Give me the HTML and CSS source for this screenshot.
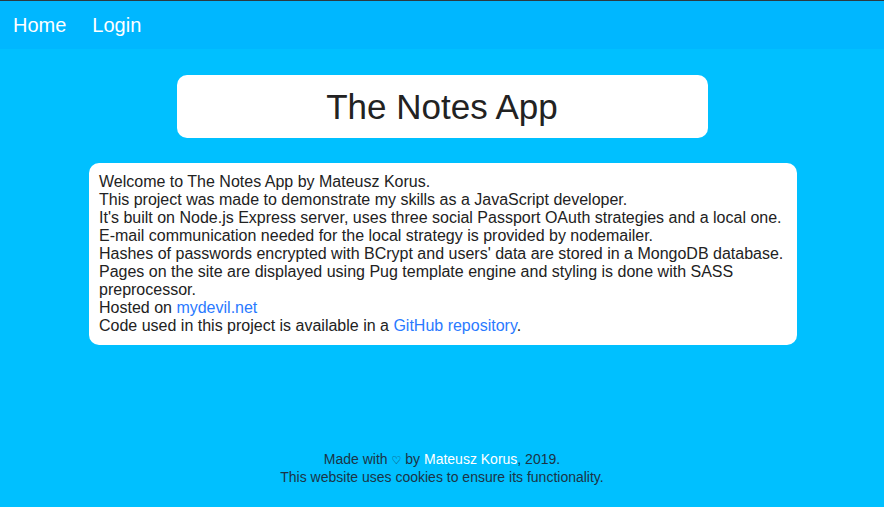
FILE: index.html
```html
<!DOCTYPE html>
<html>
<head>
<meta charset="utf-8">
<title>The Notes App</title>
<link rel="stylesheet" href="styles.css">
</head>
<body>
<div class="page">
  <nav class="navbar">
    <a class="nav-link" href="#">Home</a>
    <a class="nav-link" href="#">Login</a>
  </nav>
  <main class="main">
    <div class="title-box"><h1 class="title">The Notes App</h1></div>
    <div class="info-box">
      Welcome to The Notes App by Mateusz Korus.<br>
      This project was made to demonstrate my skills as a JavaScript developer.<br>
      It's built on Node.js Express server, uses three social Passport OAuth strategies and a local one.<br>
      E-mail communication needed for the local strategy is provided by nodemailer.<br>
      Hashes of passwords encrypted with BCrypt and users' data are stored in a MongoDB database.<br>
      Pages on the site are displayed using Pug template engine and styling is done with SASS preprocessor.<br>
      Hosted on <a class="link" href="#">mydevil.net</a><br>
      Code used in this project is available in a <a class="link" href="#">GitHub repository</a>.
    </div>
  </main>
  <footer class="footer">
    <div>Made with <span class="heart">♡</span> by <a class="footer-link" href="#">Mateusz Korus</a>, 2019.</div>
    <div>This website uses cookies to ensure its functionality.</div>
  </footer>
</div>
</body>
</html>
```
FILE: styles.css
```css
html, body {
  margin: 0;
  padding: 0;
  height: 100%;
}
body {
  background: #00c0ff;
  font-family: "Liberation Sans", Arial, sans-serif;
  color: #222;
}
.page {
  min-height: 100%;
  display: flex;
  flex-direction: column;
  border-top: 1px solid #2b3a42;
  box-sizing: border-box;
}
.navbar {
  background: #00b7ff;
  height: 48px;
  display: flex;
  align-items: center;
}
.nav-link {
  color: #fff;
  text-decoration: none;
  font-size: 20px;
  padding: 0 13px;
}
.main {
  flex: 1;
  display: flex;
  flex-direction: column;
  align-items: center;
  padding-top: 26px;
  gap: 25px;
}
.title-box {
  width: 531px;
  height: 63px;
  background: #fff;
  border-radius: 10px;
  display: flex;
  align-items: center;
  justify-content: center;
}
.title {
  margin: 0;
  font-weight: normal;
  font-size: 35px;
  color: #222;
  line-height: 1;
}
.info-box {
  width: 708px;
  box-sizing: border-box;
  background: #fff;
  border-radius: 10px;
  padding: 10px;
  margin-left: 2px;
  font-size: 16px;
  line-height: 18px;
  color: #222;
}
.link {
  color: #2a7aff;
  text-decoration: none;
}
.footer {
  text-align: center;
  font-size: 14px;
  line-height: 17px;
  color: #1c3446;
  padding-bottom: 21px;
}
.heart {
  font-family: "DejaVu Sans", sans-serif;
  font-size: 11px;
  color: #1c3446;
}
.footer-link {
  color: #fff;
  text-decoration: none;
}
```
